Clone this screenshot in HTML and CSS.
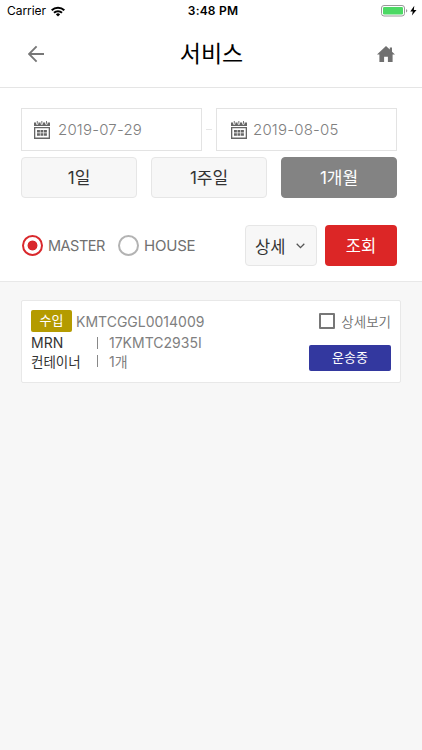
FILE: index.html
```html
<!DOCTYPE html>
<html lang="ko">
<head>
<meta charset="utf-8">
<title>서비스</title>
<link rel="stylesheet" href="styles.css">
</head>
<body>
<svg class="defs" width="0" height="0" aria-hidden="true">
  <symbol id="calendar" viewBox="0 0 16 18">
    <path d="M0 1.500h2V2.500a1.200 1.200 0 0 0 2.400 0V1.500h2.200V2.500A1.200 1.200 0 0 0 9 2.500V1.500h2.200V2.500a1.200 1.200 0 0 0 2.400 0V1.500H16V5H0z"/>
    <path d="M2.800 0h.9v2.800h-.9zM7.400 0h.9v2.800h-.9zM12 0h.9v2.800H12z"/>
    <path fill-rule="evenodd" d="M0 6h16v12H0zm1.300 1.300v9.300h13.400V7.300z"/>
    <path d="M3 9h2.900v2.600H3zM6.500 9h2.900v2.600H6.500zM10 9h2.900v2.600H10zM3 12.200h2.900v2.600H3zM6.500 12.200h2.900v2.600H6.500zM10 12.200h2.900v2.600H10z"/>
  </symbol>
</svg>
<div class="status">
  <div class="carrier"><span>Carrier</span>
    <svg width="14" height="11" viewBox="0 0 14 11"><g fill="none" stroke="#000" stroke-width="2"><path d="M.7 4.200a9 9 0 0 1 12.600 0"/><path d="M3 6.800a5.700 5.700 0 0 1 8 0"/></g><path d="M7 10.500 4.900 8.400a3 3 0 0 1 4.200 0z"/></svg>
  </div>
  <div class="clock">3:48 PM</div>
  <div class="power">
    <svg width="37" height="12" viewBox="0 0 37 12"><rect x=".5" y=".5" width="23" height="10.500" rx="2.500" fill="#fff" stroke="#999"/><rect x="2" y="2" width="20" height="7.500" rx="1.300" fill="#4cd964"/><path d="M25 4v3.500q1.300-.5 1.300-1.750T25 4z" fill="#999"/><path d="M33.300.8 29.300 6.400h2.500L30.900 10.600 35.500 4.900h-2.700z"/></svg>
  </div>
</div>
<header class="header">
  <svg width="18" height="18" viewBox="0 0 18 18" fill="none" stroke="#777" stroke-width="1.900"><path d="M16 9H1.500M8.600 1.400 1 9l7.600 7.600"/></svg>
  <h1 class="title">서비스</h1>
  <svg width="18" height="16" viewBox="0 0 18 16" fill="#707070"><path d="M9 0 0 8.500h2.400V16h4.700v-5.200h3.800V16h4.700V8.500H18l-3-2.800V1.600h-2.200v2z"/></svg>
</header>
<section class="search">
  <div class="dates">
    <div class="date"><svg class="cal" width="16" height="18"><use href="#calendar"/></svg><span class="d1">2019-07-29</span></div>
    <span class="dash"></span>
    <div class="date second"><svg class="cal" width="16" height="18"><use href="#calendar"/></svg><span class="d2">2019-08-05</span></div>
  </div>
  <div class="periods">
    <div class="btn">1일</div>
    <div class="btn">1주일</div>
    <div class="btn active">1개월</div>
  </div>
  <div class="filters">
    <span class="radio on"></span><span class="rlabel master">MASTER</span>
    <span class="radio"></span><span class="rlabel house">HOUSE</span>
    <div class="select"><span>상세</span><svg width="9" height="6" viewBox="0 0 9 6" fill="none" stroke="#555" stroke-width="1.300"><path d="m.7.8 3.800 3.800L8.300.8"/></svg></div>
    <div class="submit">조회</div>
  </div>
</section>
<main class="list">
  <article class="card">
    <div class="info">
      <div class="top"><span class="tag">수입</span><span class="bl">KMTCGGL0014009</span></div>
      <div class="line mrn"><span class="key">MRN</span><span class="bar"></span><span class="val">17KMTC2935I</span></div>
      <div class="line cnt"><span class="key">컨테이너</span><span class="bar"></span><span class="val">1개</span></div>
    </div>
    <div class="side">
      <div class="detail"><span class="check"></span><span>상세보기</span></div>
      <div class="state">운송중</div>
    </div>
  </article>
</main>
</body>
</html>
```
FILE: styles.css
```css
* { box-sizing: border-box; }
body {
  margin: 0;
  height: 750px;
  display: flex;
  flex-direction: column;
  overflow: hidden;
  background: #fff;
  color: #333;
  font-family: Inter, "Noto Sans CJK KR", sans-serif;
}
svg { display: block; flex: none; }
.defs { position: absolute; }
.status {
  height: 22px;
  display: grid;
  grid-template-columns: 1fr auto 1fr;
  align-items: center;
  padding: 0 4px 0 7px;
  color: #000;
  font-size: 12px;
  line-height: 22px;
}
.carrier { display: flex; align-items: center; gap: 5px; letter-spacing: -0.05px; }
.clock { font-weight: 600; letter-spacing: 0.2px; padding-left: 1px; }
.power { display: flex; justify-content: flex-end; }
.header {
  height: 66px;
  display: flex;
  align-items: center;
  justify-content: space-between;
  padding: 0 27px 2px 28px;
  border-bottom: 1px solid #e5e5e5;
}
.title { margin: 0; padding-top: 1px; font-size: 23px; font-weight: 400; line-height: 34px; color: #000; }
.search {
  height: 194px;
  padding: 20px 25px 0 21px;
  border-bottom: 1px solid #e8e8e8;
}
.dates { display: flex; align-items: center; justify-content: space-between; }
.date {
  width: 181px;
  height: 43px;
  display: flex;
  align-items: center;
  gap: 8px;
  padding-left: 12px;
  border: 1px solid #e3e3e3;
  color: #808080;
  font-size: 15px;
  font-weight: 350;
  letter-spacing: 0.2px;
}
.date.second { padding-left: 14px; gap: 6px; }
.cal { fill: #666; }
.dash { width: 6px; height: 1px; background: #e6e6e6; }
.periods { display: flex; justify-content: space-between; margin-top: 6px; }
.btn {
  width: 116px;
  height: 41px;
  border: 1px solid #e6e6e6;
  border-radius: 4px;
  background: #f7f7f7;
  font-size: 17px;
  line-height: 41px;
  text-align: center;
  font-weight: 400;
}
.btn.active { background: #838383; border-color: #838383; color: #fff; }
.filters { display: flex; align-items: center; margin-top: 27px; height: 41px; }
.radio {
  width: 21px;
  height: 21px;
  margin-left: 1px;
  border: 2px solid #b3b3b3;
  border-radius: 50%;
}
.radio.on {
  border-color: #d9282c;
  background: radial-gradient(circle, #d9282c 4.600px, #fff 5.300px);
}
.rlabel { margin-left: 5px; color: #707070; font-size: 15px; font-weight: 400; letter-spacing: -0.2px; }
.master { width: 69px; font-size: 14.500px; letter-spacing: -0.5px; }
.select {
  width: 72px;
  height: 41px;
  margin-left: auto;
  display: flex;
  align-items: center;
  gap: 11px;
  padding-left: 9px;
  border: 1px solid #e6e6e6;
  border-radius: 4px;
  background: #f7f7f7;
  font-size: 16.500px;
}
.submit {
  width: 72px;
  height: 41px;
  margin-left: 8px;
  border-radius: 4px;
  background: #dc2626;
  color: #fff;
  font-size: 16.500px;
  line-height: 43px;
  text-align: center;
}
.list { flex: 1; background: #f7f7f7; padding: 18px 21px; }
.card {
  height: 83px;
  display: flex;
  justify-content: space-between;
  padding: 9px 9px 0;
  border: 1px solid #e8e8e8;
  border-radius: 2px;
  background: #fff;
}
.top { display: flex; align-items: center; height: 22px; gap: 4px; }
.tag {
  width: 41px;
  height: 22px;
  border-radius: 2px;
  background: #b49b00;
  color: #fff;
  font-size: 13px;
  line-height: 21px;
  text-align: center;
}
.bl { color: #808080; font-size: 14px; font-weight: 400; }
.line { display: flex; align-items: center; height: 19px; font-size: 14px; font-weight: 400; }
.mrn { margin-top: 1px; }
.cnt { height: 18px; }
.key { width: 66px; }
.cnt .key { font-size: 13.500px; }
.bar { width: 1px; height: 12px; margin-right: 11px; background: #888; }
.val { color: #808080; }
.side { display: flex; flex-direction: column; align-items: flex-end; }
.detail { display: flex; align-items: center; height: 22px; gap: 6px; color: #707070; font-size: 13.500px; font-weight: 350; }
.check { width: 16px; height: 16px; border: 2px solid #777; border-radius: 1px; }
.state {
  width: 82px;
  height: 26px;
  margin-top: 13px;
  border-radius: 2px;
  background: #33389f;
  color: #fff;
  font-size: 13px;
  line-height: 24px;
  text-align: center;
}
```
